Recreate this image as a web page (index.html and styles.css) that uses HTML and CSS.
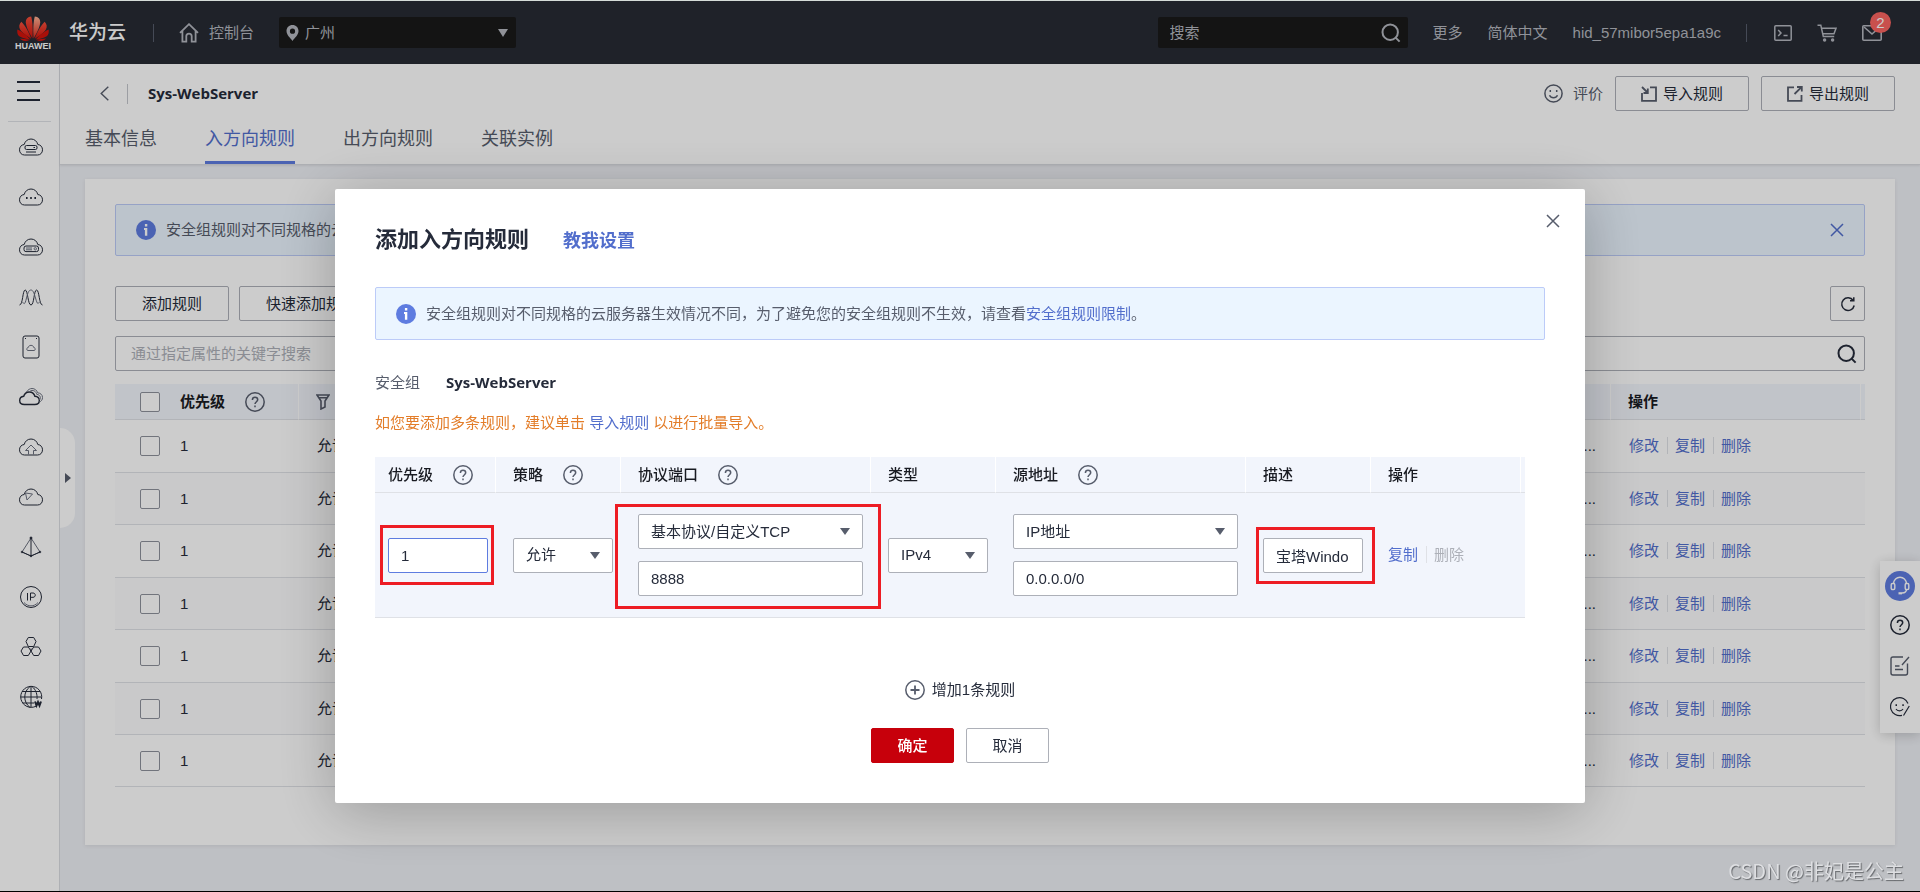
FILE: index.html
```html
<!DOCTYPE html>
<html lang="zh-CN">
<head>
<meta charset="utf-8">
<title>Sys-WebServer</title>
<link rel="stylesheet" href="styles.css">
</head>
<body>
<svg class="defs" aria-hidden="true">
  <symbol id="cloud" viewBox="0 0 26 26"><path d="M6.5 21C3.5 21 1.5 18.8 1.5 15.8C1.5 13 3.3 10.8 6.2 10.5C7 7.3 9.5 5 13 5C16.5 5 19 7.3 19.8 10.5C22.7 10.8 24.5 13 24.5 15.8C24.5 18.8 22.5 21 19.5 21Z"/></symbol>
  <symbol id="help" viewBox="0 0 20 20"><circle cx="10" cy="10" r="9.2"/><path d="M7.4 8C7.4 6.2 8.5 5.3 10 5.3S12.7 6.3 12.7 7.8C12.7 9.6 10 9.9 10 12.1M10 13.6V15.2"/></symbol>
  <symbol id="info" viewBox="0 0 20 20"><circle cx="10" cy="10" r="10" fill="#5e7ce0"/><path d="M8 8H11.3V15.8H8.9V10H8ZM8.9 4H11.3V6.5H8.9Z" fill="#fff"/></symbol>
  <symbol id="cross" viewBox="0 0 14 14"><path d="M1 1L13 13M13 1L1 13"/></symbol>
  <symbol id="search" viewBox="0 0 20 20"><circle cx="9.2" cy="9.2" r="7.7"/><path d="M14.6 14.6L18.6 18.6"/></symbol>
</svg>
<div class="shell">
  <header class="topbar">
    <a class="logo" href="#">
      <svg width="32" height="25" viewBox="0 0 32 25">
        <defs><linearGradient id="red" x1="0" y1="0" x2="0" y2="1"><stop offset="0" stop-color="#f5503c"/><stop offset="1" stop-color="#d3140c"/></linearGradient>
        <linearGradient id="pale" x1="0" y1="0" x2="0" y2="1"><stop offset="0" stop-color="#ffb496"/><stop offset="1" stop-color="#dc2517"/></linearGradient></defs>
        <path fill="url(#red)" d="M15.4 22.5C15.9 15 15.8 6 14.2 .4C10.6 .8 8.7 3 8.8 6.2C9 11 12.5 17.5 15.4 22.5Z"/>
        <path fill="url(#pale)" d="M16.6 22.5C16.1 15 16.2 6 17.8 .4C21.4 .8 23.3 3 23.2 6.2C23 11 19.5 17.5 16.6 22.5Z"/>
        <path fill="url(#red)" d="M14.2 22.8C12.2 16.5 8 9.2 4.3 5.8C2 8.3 1.7 11 3.1 13.6C5 17 10.3 20.6 14.2 22.8ZM17.8 22.8C19.8 16.5 24 9.2 27.7 5.8C30 8.3 30.3 11 28.9 13.6C27 17 21.7 20.6 17.8 22.8Z"/>
        <path fill="#d3140c" d="M13.2 23.4C10 19.6 4.7 15.4 .4 13.5C-.2 17 .8 19.5 3.2 20.7C6 22.3 9.8 23.2 13.2 23.4ZM18.8 23.4C22 19.6 27.3 15.4 31.6 13.5C32.2 17 31.2 19.5 28.8 20.7C26 22.3 22.2 23.2 18.8 23.4Z"/>
        <path fill="#d3140c" d="M12.7 24C9.5 23.4 5.8 22.7 3 22.6C4.8 25 8.5 25.7 12.7 24ZM19.3 24C22.5 23.4 26.2 22.7 29 22.6C27.2 25 23.5 25.7 19.3 24Z"/>
      </svg>
      <span>HUAWEI</span>
    </a>
    <span class="brand">华为云</span>
    <i class="bar"></i>
    <a class="console" href="#"><svg width="20" height="20" viewBox="0 0 20 20" fill="none" stroke="currentColor" stroke-width="1.8"><path d="M1 9.8L10 1.2L19 9.8M3.4 8V18.7H7.3V13.2C7.3 11.6 8.5 10.6 10 10.6S12.7 11.6 12.7 13.2V18.7H16.6V8"/></svg>控制台</a>
    <label class="region">
      <svg width="13" height="16" viewBox="0 0 13 16"><path fill="currentColor" fill-rule="evenodd" d="M6.5 0C10 0 12.5 2.6 12.5 6C12.5 10 8.5 13 6.5 16C4.5 13 .5 10 .5 6C.5 2.6 3 0 6.5 0ZM6.5 3.6A2.6 2.6 0 1 0 6.5 8.8A2.6 2.6 0 1 0 6.5 3.6Z"/></svg>
      <select aria-label="区域"><option>广州</option></select>
    </label>
    <div class="top-right">
      <label class="top-search"><input type="text" placeholder="搜索" aria-label="搜索"><svg class="line2" width="20" height="20"><use href="#search"/></svg></label>
      <a href="#">更多</a>
      <a href="#">简体中文</a>
      <a href="#">hid_57mibor5epa1a9c</a>
      <i class="bar"></i>
      <a class="ico" href="#" aria-label="终端"><svg width="18" height="16" viewBox="0 0 18 16" fill="none" stroke="currentColor" stroke-width="1.5"><rect x=".8" y=".8" width="16.4" height="14.4" rx="1"/><path d="M4.2 5L7 8L4.2 11M9.5 10.6H13.6"/></svg></a>
      <a class="ico" href="#" aria-label="购物车"><svg width="20" height="18" viewBox="0 0 20 18" fill="none" stroke="currentColor" stroke-width="1.5"><path d="M.5 1.2H3.8L6.3 12.5H17.2M4.6 4.2H19L17 9.8H5.8"/><circle cx="7.6" cy="16" r="1" fill="currentColor"/><circle cx="15.6" cy="16" r="1" fill="currentColor"/></svg></a>
      <a class="ico mail" href="#" aria-label="消息"><svg width="20" height="16" viewBox="0 0 20 16" fill="none" stroke="currentColor" stroke-width="1.6"><rect x=".8" y=".8" width="18.4" height="14.4" rx="1"/><path d="M2 2L10 9L18 2"/></svg><b>2</b></a>
    </div>
  </header>
  <div class="body">
    <nav class="side">
      <button class="menu" aria-label="菜单"><i></i><i></i><i></i></button>
      <i class="side-line"></i>
      <a href="#"><svg><use href="#cloud"/><rect x="7" y="11.5" width="12" height="4" rx="1.5"/><path d="M15.5 13.5H17M8 18H18" /></svg></a>
      <a href="#"><svg><use href="#cloud"/><path class="dots" d="M8 14H9.6M12.2 14H13.8M16.4 14H18"/></svg></a>
      <a href="#"><svg><use href="#cloud"/><rect x="6" y="12" width="14.5" height="5.6" rx="2"/><path class="thin" d="M8 14H14M8 15.8H14"/><circle class="thin" cx="17.3" cy="14.8" r="1.2"/></svg></a>
      <a href="#"><svg><path d="M1.5 21C5 21 4.500 6 7.200 6S9.800 21 13 21S15.800 6 18.600 6S21 21 24.500 21"/><path class="thin" d="M4.500 18C6.500 21 7 20 8.500 14S11 6 13 6S16 9 17.500 14S19.500 21 21.500 18"/></svg></a>
      <a href="#"><svg><rect x="5" y="2" width="16" height="22" rx="2"/><path d="M7 4.500H8M18 4.500H19"/><path class="thin" d="M10 16.500C8.300 16.500 8.300 13.600 10.200 13.600C10.500 10.600 15.500 10.600 15.800 13.600C17.700 13.600 17.700 16.500 16 16.500Z"/></svg></a>
      <a href="#"><svg><path class="mid" d="M6.300 20.500C3.500 20.500 1.700 18.800 1.700 16.500C1.700 14.300 3.300 12.600 5.700 12.300C6.500 9.500 8.600 8 11.300 8C14 8 16.200 9.700 16.900 12.300C19.400 12.500 21.300 14.200 21.300 16.500C21.300 18.800 19.400 20.500 16.800 20.500Z"/><path class="thin" d="M8.500 8C10 5.600 12 4.500 14 4.500C16.700 4.500 18.900 6.200 19.600 8.800C22.500 9 24.500 10.800 24.500 13.500C24.500 15.800 23.300 17.300 21.400 18M11.500 7.500C15 5 18.200 7.500 18.700 10.300C22.300 10.800 23.300 14 21.500 16"/></svg></a>
      <a href="#"><svg><use href="#cloud"/><path class="thin" d="M10.500 20.500V16.500H7.500L13 11L18.500 16.500H15.500V20.500"/></svg></a>
      <a href="#"><svg><use href="#cloud"/><path class="thin" d="M7.500 9L14.500 10L9 16Z"/></svg></a>
      <a href="#"><svg><path class="thin" d="M13 4L4 18L13 22L22 18L13 4"/><path d="M13 4V22M4 18L13 22L22 18"/><circle cx="13" cy="4" r="1" fill="currentColor"/><circle cx="4" cy="18" r=".8"/><circle cx="22" cy="18" r=".8"/><circle cx="13" cy="22" r=".8"/></svg></a>
      <a href="#"><svg><circle cx="13" cy="13" r="10.500"/><path class="thin" d="M6 18.500C10 23 16 23 20 18.500"/><path d="M9.500 9V16.500M12.500 16.500V9H15C18 9 18 13.300 15 13.300H12.500"/></svg></a>
      <a href="#"><svg><path d="M10.300 3.500H15.700L18 7.500L15.700 12.500H10.300L8 7.500ZM5.500 13H10.300L13 17L10.300 21.500H5.500L3 17ZM15.700 13H20.500L23 17L20.500 21.500H15.700L13 17ZM13 14.500V17"/></svg></a>
      <a href="#"><svg><path d="M18 22.200A10.500 10.500 0 1 1 23.500 15M13 2.500V23.500M2.500 13H23.500M4 7.500H22M4.500 19H16M12 2.500C5 8 5 18 12 23.500M14 2.500C18 5.500 19.500 11 19 15"/><path class="bold" d="M17 17.500L18.500 21.500L20 18L21.500 21.500L23 17.500"/></svg></a>
    </nav>
    <div class="work">
      <button class="handle" aria-label="展开"></button>
      <div class="page-head">
        <div class="title-row">
          <a class="back" href="#" aria-label="返回"><svg width="9" height="15" viewBox="0 0 9 15" fill="none" stroke="#575d6c" stroke-width="1.400"><path d="M8.300 .7L1.200 7.500L8.300 14.300"/></svg></a>
          <i class="title-bar"></i>
          <h1>Sys-WebServer</h1>
          <div class="title-actions">
            <a class="rate" href="#"><svg width="19" height="19" viewBox="0 0 19 19" fill="none" stroke="#575d6c" stroke-width="1.500"><circle cx="9.500" cy="9.500" r="8.600"/><path d="M5.500 11.200C7 14.500 12 14.500 13.500 11.200M6.300 6V8M12.700 6V8"/></svg>评价</a>
            <button class="btn wide"><svg width="16" height="16" viewBox="0 0 16 16" fill="none" stroke="#575d6c" stroke-width="1.800"><path d="M1 7V14.800H15V1.400H9M1 1L6.500 6.500M6.800 2.500V7H2.500"/></svg>导入规则</button>
            <button class="btn wide"><svg width="16" height="16" viewBox="0 0 16 16" fill="none" stroke="#575d6c" stroke-width="1.800"><path d="M7 1.400H1V14.800H14.500V9M7.500 8L14.500 1.200M10 1H14.800V5.500"/></svg>导出规则</button>
          </div>
        </div>
        <nav class="tabs"><a href="#">基本信息</a><a href="#" class="on">入方向规则</a><a href="#">出方向规则</a><a href="#">关联实例</a></nav>
      </div>
      <main class="card">
        <div class="notice"><svg width="20" height="20"><use href="#info"/></svg><span>安全组规则对不同规格的云服务器生效情况不同，为了避免您的安全组规则不生效，请查看<a href="#">安全组规则限制</a>。</span><button class="x blue" aria-label="关闭"><svg width="14" height="14"><use href="#cross"/></svg></button></div>
        <div class="tools"><button class="btn">添加规则</button><button class="btn">快速添加规则</button><button class="btn square" aria-label="刷新"><svg width="16" height="16" viewBox="0 0 16 16" fill="none" stroke="#252b3a" stroke-width="1.500"><path d="M13.200 4.500A6.300 6.300 0 1 0 14.200 9.500M13.800 1.200V4.800H10"/></svg></button></div>
        <label class="filter"><input type="text" placeholder="通过指定属性的关键字搜索" aria-label="通过指定属性的关键字搜索"><svg class="line2" width="20" height="20"><use href="#search"/></svg></label>
        <table class="rules">
          <colgroup><col class="c-check"><col class="c-pri"><col class="c-pol"><col><col class="c-ops"><col class="c-end"></colgroup>
          <thead><tr><th><input type="checkbox" aria-label="全选"></th><th><span class="th">优先级<svg class="q"><use href="#help"/></svg></span></th><th><span class="th"><svg width="14" height="16" viewBox="0 0 14 16" fill="none" stroke="#575d6c" stroke-width="1.600"><path d="M1 1H13L9 7V13L5 15V7ZM3 3.800H11"/></svg>策略</span></th><th></th><th>操作</th><th></th></tr></thead>
          <tbody>
            <tr><td><input type="checkbox" aria-label="选择第1条"></td><td>1</td><td>允许</td><td class="more">...</td><td class="ops"><a href="#">修改</a><a href="#">复制</a><a href="#">删除</a></td><td></td></tr>
            <tr><td><input type="checkbox" aria-label="选择第2条"></td><td>1</td><td>允许</td><td class="more">...</td><td class="ops"><a href="#">修改</a><a href="#">复制</a><a href="#">删除</a></td><td></td></tr>
            <tr><td><input type="checkbox" aria-label="选择第3条"></td><td>1</td><td>允许</td><td class="more">...</td><td class="ops"><a href="#">修改</a><a href="#">复制</a><a href="#">删除</a></td><td></td></tr>
            <tr><td><input type="checkbox" aria-label="选择第4条"></td><td>1</td><td>允许</td><td class="more">...</td><td class="ops"><a href="#">修改</a><a href="#">复制</a><a href="#">删除</a></td><td></td></tr>
            <tr><td><input type="checkbox" aria-label="选择第5条"></td><td>1</td><td>允许</td><td class="more">...</td><td class="ops"><a href="#">修改</a><a href="#">复制</a><a href="#">删除</a></td><td></td></tr>
            <tr><td><input type="checkbox" aria-label="选择第6条"></td><td>1</td><td>允许</td><td class="more">...</td><td class="ops"><a href="#">修改</a><a href="#">复制</a><a href="#">删除</a></td><td></td></tr>
            <tr><td><input type="checkbox" aria-label="选择第7条"></td><td>1</td><td>允许</td><td class="more">...</td><td class="ops"><a href="#">修改</a><a href="#">复制</a><a href="#">删除</a></td><td></td></tr>
          </tbody>
        </table>
      </main>
    </div>
  </div>
</div>
<aside class="float">
  <a class="round" href="#" aria-label="客服"><svg width="20" height="20" viewBox="0 0 20 20" fill="none" stroke="#fff" stroke-width="1.400"><path d="M3.500 8C3.500 -1 16.500 -1 16.500 8M16.500 13C16.500 15.500 14.500 17 12 17"/><rect x="1.200" y="7.500" width="3.600" height="6" rx="1.200"/><rect x="15.200" y="7.500" width="3.600" height="6" rx="1.200"/><path d="M8.500 17.300H12" stroke-width="2.200"/></svg></a>
  <a href="#" aria-label="帮助"><svg class="q dark"><use href="#help"/></svg></a>
  <a href="#" aria-label="反馈"><svg width="20" height="20" viewBox="0 0 20 20" fill="none" stroke="#575d6c" stroke-width="1.400"><path d="M13 1H3C1.500 1 1 1.500 1 3V17C1 18.500 1.500 19 3 19H15.500C17 19 17.500 18.500 17.500 17V7.500M19 1L12 9M5 10H9.500M5 13.500H13"/></svg></a>
  <a href="#" aria-label="评价"><svg width="20" height="20" viewBox="0 0 20 20" fill="none" stroke="#252b3a" stroke-width="1.200"><path d="M18 6.500A9 9 0 1 0 12 18.300M19.300 9L13.500 18.500M6 12C7.500 14.500 11.500 14.500 13 12"/><path d="M5.500 8.200H7M12.300 8.200H13.800" stroke-width="1.800"/></svg></a>
</aside>
<div class="mask">
  <section class="dialog" role="dialog" aria-labelledby="dlg-title">
    <button class="x close" aria-label="关闭"><svg width="14" height="14"><use href="#cross"/></svg></button>
    <div class="dlg-head"><h2 id="dlg-title">添加入方向规则</h2><a href="#">教我设置</a></div>
    <div class="notice"><svg width="20" height="20"><use href="#info"/></svg><span>安全组规则对不同规格的云服务器生效情况不同，为了避免您的安全组规则不生效，请查看<a href="#">安全组规则限制</a>。</span></div>
    <div class="group"><span>安全组</span><strong>Sys-WebServer</strong></div>
    <p class="hint">如您要添加多条规则，建议单击 <a href="#">导入规则</a> 以进行批量导入。</p>
    <table class="editor">
      <colgroup><col class="e-s1"><col class="e-s"><col class="e-l"><col class="e-s"><col class="e-l"><col class="e-s"><col class="e-ops"><col class="e-end"></colgroup>
      <thead><tr><th><span class="th">优先级<svg class="q"><use href="#help"/></svg></span></th><th><span class="th">策略<svg class="q"><use href="#help"/></svg></span></th><th><span class="th">协议端口<svg class="q"><use href="#help"/></svg></span></th><th>类型</th><th><span class="th">源地址<svg class="q"><use href="#help"/></svg></span></th><th>描述</th><th>操作</th><th></th></tr></thead>
      <tbody><tr>
        <td><div class="stack marked m1"><input class="field focus" type="text" value="1" aria-label="优先级"></div></td>
        <td><div class="sel"><select class="field" aria-label="策略"><option>允许</option></select></div></td>
        <td><div class="stack marked m2"><div class="sel"><select class="field" aria-label="协议"><option>基本协议/自定义TCP</option></select></div><input class="field" type="text" value="8888" aria-label="端口"></div></td>
        <td><div class="sel"><select class="field" aria-label="类型"><option>IPv4</option></select></div></td>
        <td><div class="stack"><div class="sel"><select class="field" aria-label="源地址类型"><option>IP地址</option></select></div><input class="field" type="text" value="0.0.0.0/0" aria-label="源地址"></div></td>
        <td><div class="stack marked m3"><input class="field" type="text" value="宝塔Windo" aria-label="描述"></div></td>
        <td class="ops"><a href="#">复制</a><a class="off">删除</a></td>
        <td></td>
      </tr></tbody>
    </table>
    <button class="add"><svg width="20" height="20" viewBox="0 0 20 20" fill="none" stroke="#575d6c" stroke-width="1.500"><circle cx="10" cy="10" r="9.200"/><path d="M10 5.500V14.500M5.500 10H14.500" stroke-width="1.800"/></svg>增加1条规则</button>
    <div class="foot"><button class="btn primary">确定</button><button class="btn">取消</button></div>
  </section>
</div>
<div class="watermark">CSDN @非妃是公主</div>
</body>
</html>
```
FILE: styles.css
```css
* { box-sizing: border-box; }
body { margin: 0; font: 15px/20px "Liberation Sans", "Noto Sans CJK SC", sans-serif; color: #252b3a; background: #eef0f5; }
a { color: #526ecc; text-decoration: none; }
button, input, select { font: inherit; color: inherit; margin: 0; }
button { cursor: pointer; }
svg { display: block; flex: none; }
h1, h2, p { margin: 0; }
.defs { position: absolute; width: 0; height: 0; }

.shell { display: flex; flex-direction: column; min-height: 100vh; border-top: 1px solid #d5dcd8; border-bottom: 1px solid #000; }

/* top bar */
.topbar { display: flex; align-items: center; height: 63px; padding: 0 38px 0 17px; background: #272b34; color: #b4b7bf; }
.topbar a { color: inherit; }
.logo { width: 32px; margin-top: 1px; font: bold 9px/10px "Liberation Sans", sans-serif; text-align: center; }
.logo span { display: block; color: #fff; margin: 0 -4px; }
.brand { margin: 0 27px 0 20px; font-size: 19px; font-weight: 500; color: #fff; }
.bar { width: 1px; height: 18px; background: #575d6c; }
.console { display: flex; align-items: center; gap: 10px; margin: 0 25px; }
.region { position: relative; display: flex; align-items: center; gap: 6px; width: 237px; height: 31px; padding: 0 8px 0 7px; background: #191919; border-radius: 2px; }
.region select { flex: 1; appearance: none; border: 0; padding: 0; background: none; outline: 0; }
.region::after { content: ""; border: 5px solid transparent; border-top: 8px solid currentColor; border-bottom: 0; }
.top-right { display: flex; align-items: center; gap: 25px; margin-left: auto; }
.top-right .bar { margin-right: 2px; }
.top-search { display: flex; align-items: center; width: 250px; height: 31px; padding: 0 7px 0 12px; background: #191919; border-radius: 2px; }
.top-search input { flex: 1; min-width: 0; border: 0; padding: 0; background: none; outline: 0; }
.top-search input::placeholder { color: #b4b7bf; opacity: 1; }
.line2 { fill: none; stroke: currentColor; stroke-width: 2; }
.mail { position: relative; }
.mail b { position: absolute; right: -9px; bottom: 8px; width: 21px; height: 21px; border-radius: 50%; background: #fa6461; color: #fff; font-weight: 400; line-height: 21px; text-align: center; }

/* layout */
.body { display: flex; flex: 1; }
.side { display: flex; flex-direction: column; align-items: center; gap: 24px; width: 60px; padding: 17px 0 0 3px; background: #fff; border-right: 1px solid #dadce1; }
.side a { color: #252b3a; }
.side svg { width: 26px; height: 26px; fill: none; stroke: #252b3a; stroke-width: 1; }
.side .thin { stroke: #6c7180; }
.side .mid { stroke-width: 1.4; }
.side .dots, .side .bold { stroke-width: 2; }
.menu { display: flex; flex-direction: column; justify-content: space-between; width: 23px; height: 20px; margin: 0 5px -4px 0; padding: 0; border: 0; background: none; }
.menu i { height: 2px; background: #252b3a; }
.side-line { width: 43px; height: 1px; margin: 0 3px -12px 0; background: #dfe1e6; }
.work { position: relative; flex: 1; min-width: 0; }
.handle { position: absolute; left: 0; top: 364px; width: 15px; height: 100px; padding: 0 0 0 5px; border: 0; border-radius: 0 15px 15px 0; background: #fff; }
.handle::before { content: ""; display: block; width: 0; border: 5px solid transparent; border-left: 6px solid #575d6c; border-right: 0; }

.page-head { background: #fff; border-bottom: 1px solid #d9dbe0; padding: 12px 25px 0; box-shadow: 0 1px 2px rgba(0,0,0,.08); }
.title-row { display: flex; align-items: center; padding-left: 15px; }
.title-bar { width: 1px; height: 20px; margin: 0 20px 0 18px; background: #c3c6cc; }
h1, .group strong { font: 700 15px/18px "Open Sans", "Noto Sans", sans-serif; }
.title-row h1 { padding-bottom: 2px; }
.title-actions { display: flex; align-items: center; gap: 12px; margin-left: auto; }
.rate { display: flex; gap: 10px; color: #575d6c; }
.tabs { display: flex; gap: 48px; }
.tabs a { height: 53px; padding-top: 18px; font-size: 18px; color: #575d6c; border-bottom: 3px solid transparent; }
.tabs .on { color: #526ecc; border-color: #5e7ce0; }

.btn { height: 35px; padding: 0 25px; background: #fff; border: 1px solid #adb0b8; border-radius: 2px; }
.btn.wide { display: flex; align-items: center; gap: 6px; }

.card { margin: 14px 25px 46px; padding: 25px 30px 58px; background: #fff; box-shadow: 0 1px 4px rgba(0,0,0,.08); }
.notice { display: flex; align-items: center; gap: 10px; min-height: 52px; padding: 0 20px; background: #ebf5ff; border: 1px solid #bccbf8; border-radius: 2px; color: #575d6c; }
.x { padding: 0; border: 0; background: none; stroke: #575d6c; stroke-width: 1.5; }
.x.blue { margin-left: auto; stroke: #526ecc; }
.tools { display: flex; gap: 10px; margin: 30px 0 15px; }
.tools .btn { padding: 0 26px; }
.tools .square { width: 35px; padding: 0 9px; margin-left: auto; }
.filter { display: flex; align-items: center; height: 35px; padding: 0 7px 0 15px; border: 1px solid #adb0b8; border-radius: 2px; }
.filter input { flex: 1; border: 0; padding: 0; background: none; outline: 0; }
.filter input::placeholder { color: #adb0b8; opacity: 1; }

/* tables */
table { border-collapse: separate; border-spacing: 0; table-layout: fixed; }
th { height: 36px; padding: 0 0 0 17px; background: #f2f5fc; border-right: 1px solid #fff; border-bottom: 1px solid #dfe1e6; text-align: left; font-weight: 500; color: #191b22; }
th:last-child { border-right: 0; }
.th { display: flex; align-items: center; gap: 20px; }
.q { width: 20px; height: 20px; fill: none; stroke: #575d6c; stroke-width: 1.5; }
.q.dark { stroke: #252b3a; }
.rules { width: 100%; margin-top: 13px; }
.rules th, h2 { font-weight: 700; }
.rules td { height: 53px; padding: 0 0 0 18px; border-bottom: 1px solid #dfe1e6; }
.rules tr:nth-child(even) td { height: 52px; background: #fcfcfd; }
.rules tr:last-child td { height: 52px; }
.rules th:first-child, .rules td:first-child { padding: 0 0 0 25px; border-right: 0; }
.rules th:nth-child(2), .rules td:nth-child(2) { padding-left: 15px; }
.c-check { width: 50px; }
.c-pri { width: 134px; }
.c-pol { width: 120px; }
.c-ops { width: 250px; }
.c-end { width: 4px; }
.rules .more { padding-right: 15px; text-align: right; }
input[type="checkbox"] { display: block; appearance: none; width: 20px; height: 20px; border: 1px solid #8e929c; border-radius: 2px; background: #fff; }
.ops a + a { margin-left: 8px; padding-left: 7px; border-left: 1px solid #dfe1e6; }
.ops .off { color: #adb0b8; }

/* floating tools */
.float { position: fixed; right: 0; top: 561px; display: flex; flex-direction: column; align-items: center; gap: 21px; width: 40px; padding: 10px 0 16px; background: #fff; box-shadow: 0 2px 12px rgba(0,0,0,.2); }
.round { display: grid; place-items: center; width: 30px; height: 30px; margin-bottom: -7px; border-radius: 50%; background: #5e7ce0; }

/* dialog */
.mask { position: fixed; inset: 1px 0; display: flex; justify-content: center; align-items: flex-start; padding-top: 188px; background: rgba(0,0,0,.2); }
.dialog { position: relative; width: 1250px; padding: 37px 40px 40px; background: #fff; border-radius: 2px; box-shadow: 0 8px 60px rgba(0,0,0,.25); }
.close { position: absolute; right: 25px; top: 25px; }
.dlg-head { display: flex; align-items: baseline; gap: 34px; margin-bottom: 33px; }
h2 { font-size: 22px; line-height: 28px; }
.dlg-head a { font-size: 18px; font-weight: 700; }
.dialog .notice { min-height: 53px; }
.group { display: flex; gap: 26px; margin-top: 33px; color: #575d6c; }
.group strong { color: #252b3a; }
.hint { margin: 20px 0 24px; color: #e37d29; }
.editor { width: calc(100% - 20px); }
.editor th:first-child, .editor td:first-child { padding-left: 13px; }
.editor td { height: 125px; padding: 0 0 0 17px; background: #f2f5fc; border-bottom: 1px solid #dfe1e6; }
.editor td:last-child, .editor th:last-child { padding: 0; }
.e-s1 { width: 121px; }
.e-s { width: 125px; }
.e-l { width: 250px; }
.e-ops { width: 150px; }
.e-end { width: 4px; }
.stack { position: relative; display: flex; flex-direction: column; gap: 12px; margin-right: 8px; }
.field { display: block; width: 100%; height: 35px; padding: 0 12px; border: 1px solid #adb0b8; border-radius: 2px; background: #fff; appearance: none; outline: 0; }
.field.focus { border-color: #5e7ce0; }
.sel { position: relative; margin-right: 8px; }
.stack .sel { margin-right: 0; }
.sel::after { content: ""; position: absolute; right: 13px; top: 14px; border: 5px solid transparent; border-top: 7px solid #575d6c; border-bottom: 0; }
.marked::after { content: ""; position: absolute; border: 3px solid #ed1c24; pointer-events: none; }
.m1::after { inset: -13px -6px -12px -8px; }
.m2::after { inset: -10px -18px -13px -23px; }
.m3::after { inset: -11px -12px -11px -7px; }
.add { display: flex; align-items: center; gap: 7px; margin: 62px auto 28px; padding: 0; border: 0; background: none; }
.foot { display: flex; justify-content: center; gap: 12px; }
.btn.primary { background: #c7000b; border-color: #c7000b; color: #fff; font-weight: 500; }
.foot .btn { padding: 0; width: 83px; }

.watermark { position: fixed; right: 16px; bottom: 9px; font: 20px/24px "Noto Sans CJK SC", sans-serif; color: #dedfe2; text-shadow: 1px 1px 1px #66686c; }
```
